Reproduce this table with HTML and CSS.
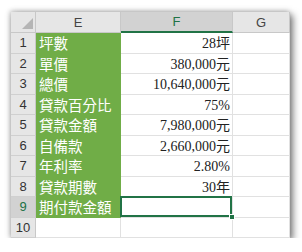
FILE: index.html
```html
<!DOCTYPE html>
<html lang="zh-Hant">
<head>
<meta charset="utf-8">
<link rel="stylesheet" href="styles.css">
</head>
<body>
<div class="page">
  <div class="sheet">
    <div class="corner"><span class="tri"></span></div>
    <div class="colhead">E</div>
    <div class="colhead sel">F</div>
    <div class="colhead">G</div>

    <div class="rowhead">1</div><div class="label">坪數</div><div class="val">28坪</div><div class="cell"></div>
    <div class="rowhead">2</div><div class="label">單價</div><div class="val">380,000元</div><div class="cell"></div>
    <div class="rowhead">3</div><div class="label">總價</div><div class="val">10,640,000元</div><div class="cell"></div>
    <div class="rowhead">4</div><div class="label">貸款百分比</div><div class="val">75%</div><div class="cell"></div>
    <div class="rowhead">5</div><div class="label">貸款金額</div><div class="val">7,980,000元</div><div class="cell"></div>
    <div class="rowhead">6</div><div class="label">自備款</div><div class="val">2,660,000元</div><div class="cell"></div>
    <div class="rowhead">7</div><div class="label">年利率</div><div class="val">2.80%</div><div class="cell"></div>
    <div class="rowhead">8</div><div class="label">貸款期數</div><div class="val">30年</div><div class="cell"></div>
    <div class="rowhead sel">9</div><div class="label">期付款金額</div><div class="val active"><span class="handle"></span></div><div class="cell"></div>
    <div class="rowhead">10</div><div class="cell"></div><div class="cell"></div><div class="cell"></div>
  </div>
</div>
</body>
</html>
```
FILE: styles.css
```css
* { box-sizing: border-box; }
html, body { margin: 0; padding: 0; background: #fff; }
.page { padding: 12px 0 0 11px; }
.sheet {
  width: 279px;
  display: grid;
  grid-template-columns: 25px 85px 112px 57px;
  grid-template-rows: 21px repeat(10, 20.5px);
  background: #fff;
  box-shadow: 3px 3px 7px rgba(0,0,0,0.5), -1px -1px 5px rgba(0,0,0,0.25);
}
.corner {
  position: relative;
  background: #e6e6e6;
  border-right: 1px solid #c8c8c8;
  border-bottom: 1px solid #c8c8c8;
}
.tri {
  position: absolute;
  right: 2px;
  bottom: 3px;
  width: 0; height: 0;
  border-left: 11px solid transparent;
  border-bottom: 11px solid #b5b5b5;
}
.colhead {
  background: #e6e6e6;
  border-right: 1px solid #c8c8c8;
  border-bottom: 1px solid #c8c8c8;
  font-family: "Liberation Sans", Arial, sans-serif;
  font-size: 13px;
  color: #444;
  display: flex;
  align-items: center;
  justify-content: center;
}
.colhead.sel {
  background: #d2d2d2;
  color: #217346;
  border-bottom: 2px solid #217346;
}
.rowhead {
  background: #e6e6e6;
  border-right: 1px solid #c8c8c8;
  border-bottom: 1px solid #d0d0d0;
  font-family: "Liberation Sans", Arial, sans-serif;
  font-size: 13px;
  color: #333;
  display: flex;
  align-items: center;
  justify-content: center;
}
.rowhead.sel { background: #d2d2d2; color: #217346; }
.label {
  background: #70ad47;
  color: #fff;
  font-family: "Noto Sans CJK TC", "Noto Sans CJK SC", sans-serif;
  font-size: 14.5px;
  line-height: 20px;
  padding-left: 3px;
  white-space: nowrap;
  overflow: hidden;
}
.val {
  border-right: 1px solid #e1e1e1;
  border-bottom: 1px solid #e1e1e1;
  font-family: "Liberation Serif", "Noto Sans CJK TC", serif;
  font-size: 14px;
  color: #222;
  text-align: right;
  padding-right: 2px;
  line-height: 21px;
  white-space: nowrap;
}
.cell {
  border-right: 1px solid #e1e1e1;
  border-bottom: 1px solid #e1e1e1;
}
.active { position: relative; }
.active::before {
  content: "";
  position: absolute;
  top: -1px; left: -1px; right: 0; bottom: 0;
  border: 2px solid #217346;
}
.handle {
  position: absolute;
  right: -3px;
  bottom: -3px;
  width: 6px;
  height: 6px;
  background: #217346;
  border: 1px solid #fff;
}
```
